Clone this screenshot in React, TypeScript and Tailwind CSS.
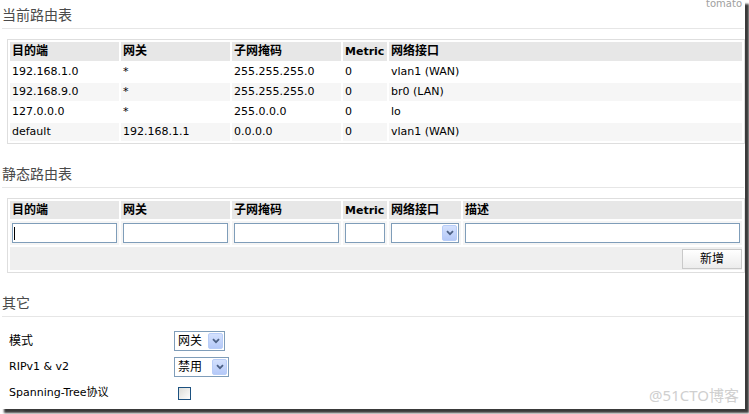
import React from "react";

const routes = [
  { dest: "192.168.1.0", gw: "*", mask: "255.255.255.0", metric: "0", iface: "vlan1 (WAN)" },
  { dest: "192.168.9.0", gw: "*", mask: "255.255.255.0", metric: "0", iface: "br0 (LAN)" },
  { dest: "127.0.0.0", gw: "*", mask: "255.0.0.0", metric: "0", iface: "lo" },
  { dest: "default", gw: "192.168.1.1", mask: "0.0.0.0", metric: "0", iface: "vlan1 (WAN)" },
];

function SectionTitle({ children, className = "" }: { children: React.ReactNode; className?: string }) {
  return (
    <div
      className={`ml-[2px] mr-[1px] border-b border-[#e6e6e6] pt-[4px] pb-[4px] text-[14px] leading-[20px] text-[#4a4a4a] font-['Noto_Sans_CJK_SC',sans-serif] ${className}`}
    >
      {children}
    </div>
  );
}

function Chevron() {
  return (
    <svg width="8" height="6" viewBox="0 0 8 6" className="block">
      <path d="M1 1.2 L4 4.2 L7 1.2" fill="none" stroke="#4d6185" strokeWidth="1.8" />
    </svg>
  );
}

function SelectBox({ label, width, textWidth }: { label?: string; width: string; textWidth: string }) {
  return (
    <div className={`flex h-[20px] items-center border border-[#7f9db9] bg-white ${width}`}>
      <span className={`pl-[3px] text-[12px] leading-[18px] text-black ${textWidth}`}>{label}</span>
      <span className="ml-auto mr-[1px] flex h-[16px] w-[15px] items-center justify-center rounded-[2px] border border-[#b8cdf8] bg-gradient-to-b from-[#d4e1fd] to-[#b5c9f8]">
        <Chevron />
      </span>
    </div>
  );
}

function TextInput({ caret = false }: { caret?: boolean }) {
  return (
    <div className="flex h-[20px] w-full items-center border border-[#7f9db9] bg-white pl-[1px]">
      {caret && <span className="h-[13px] w-[1px] bg-black" />}
    </div>
  );
}

export default function App() {
  return (
    <div className="min-h-screen bg-white">
      <div className="relative h-[409px] w-[745px] overflow-hidden bg-white text-[11px] text-black shadow-[4px_4px_2px_#3a3a3a] font-['DejaVu_Sans','Noto_Sans_CJK_SC',sans-serif]">
        <span className="absolute right-[3px] top-[-1px] text-[10px] leading-[10px] text-[#a0a0a0]">tomato</span>

        <SectionTitle>当前路由表</SectionTitle>
        <div className="ml-[7px] mt-[10px] w-[738px] border border-[#dedede]">
          <table className="w-full table-fixed border-separate border-spacing-[2px]">
            <colgroup>
              <col className="w-[109px]" />
              <col className="w-[109px]" />
              <col className="w-[109px]" />
              <col className="w-[44px]" />
              <col />
            </colgroup>
            <thead>
              <tr className="h-[18px] bg-[#e7e7e7] text-left">
                <th className="px-[2px] text-[12px] font-bold">目的端</th>
                <th className="px-[2px] text-[12px] font-bold">网关</th>
                <th className="px-[2px] text-[12px] font-bold">子网掩码</th>
                <th className="px-[2px] pt-[2px] font-bold">Metric</th>
                <th className="px-[2px] text-[12px] font-bold">网络接口</th>
              </tr>
            </thead>
            <tbody>
              {routes.map((r, i) => (
                <tr key={r.dest} className={`h-[18px] ${i % 2 ? "bg-[#f6f6f6]" : "bg-white"}`}>
                  <td className="px-[2px] leading-[18px]">{r.dest}</td>
                  <td className="px-[2px] leading-[18px]">{r.gw}</td>
                  <td className="px-[2px] leading-[18px]">{r.mask}</td>
                  <td className="px-[2px] leading-[18px]">{r.metric}</td>
                  <td className="px-[2px] leading-[18px]">{r.iface}</td>
                </tr>
              ))}
            </tbody>
          </table>
        </div>

        <SectionTitle className="mt-[15px]">静态路由表</SectionTitle>
        <div className="ml-[7px] mt-[10px] w-[738px] border border-[#dedede]">
          <table className="w-full table-fixed border-separate border-spacing-[2px]">
            <colgroup>
              <col className="w-[109px]" />
              <col className="w-[109px]" />
              <col className="w-[109px]" />
              <col className="w-[44px]" />
              <col className="w-[72px]" />
              <col />
            </colgroup>
            <thead>
              <tr className="h-[18px] bg-[#e7e7e7] text-left">
                <th className="px-[2px] text-[12px] font-bold">目的端</th>
                <th className="px-[2px] text-[12px] font-bold">网关</th>
                <th className="px-[2px] text-[12px] font-bold">子网掩码</th>
                <th className="px-[2px] pt-[2px] font-bold">Metric</th>
                <th className="px-[2px] text-[12px] font-bold">网络接口</th>
                <th className="px-[2px] text-[12px] font-bold">描述</th>
              </tr>
            </thead>
            <tbody>
              <tr className="h-[24px] bg-[#f5f5f5]">
                <td className="px-[2px] py-[2px]"><TextInput caret /></td>
                <td className="px-[2px] py-[2px]"><TextInput /></td>
                <td className="px-[2px] py-[2px]"><TextInput /></td>
                <td className="px-[2px] py-[2px]"><TextInput /></td>
                <td className="px-[2px] py-[2px]"><SelectBox width="w-[68px]" textWidth="w-[40px]" /></td>
                <td className="px-[2px] py-[2px]"><TextInput /></td>
              </tr>
              <tr className="h-[23px] bg-[#efefef]">
                <td colSpan={6} className="text-right align-middle">
                  <button className="ml-auto inline-flex h-[20px] w-[60px] items-center justify-center border border-[#c9c9c9] bg-gradient-to-b from-white to-[#ececec] text-[12px] text-black">
                    新增
                  </button>
                </td>
              </tr>
            </tbody>
          </table>
        </div>

        <SectionTitle className="mt-[15px]">其它</SectionTitle>
        <div className="grid grid-cols-[165px_auto] pl-[9px] pt-[11px]">
          <div className="flex h-[26px] items-center text-[12px]">模式</div>
          <div className="flex h-[26px] items-center">
            <SelectBox label="网关" width="w-[51px]" textWidth="" />
          </div>
          <div className="flex h-[26px] items-center">RIPv1 &amp; v2</div>
          <div className="flex h-[26px] items-center">
            <SelectBox label="禁用" width="w-[55px]" textWidth="" />
          </div>
          <div className="flex h-[26px] items-center">Spanning-Tree协议</div>
          <div className="flex h-[26px] items-center pl-[4px]">
            <span className="h-[13px] w-[13px] border border-[#1c5180] bg-gradient-to-br from-[#dcdcd7] to-white" />
          </div>
        </div>

        <span className="absolute bottom-[6px] right-[6px] text-[15px] leading-[16px] text-[#cfcfcf] font-['Noto_Sans','Noto_Sans_CJK_SC',sans-serif]">
          @51CTO博客
        </span>
      </div>
    </div>
  );
}
